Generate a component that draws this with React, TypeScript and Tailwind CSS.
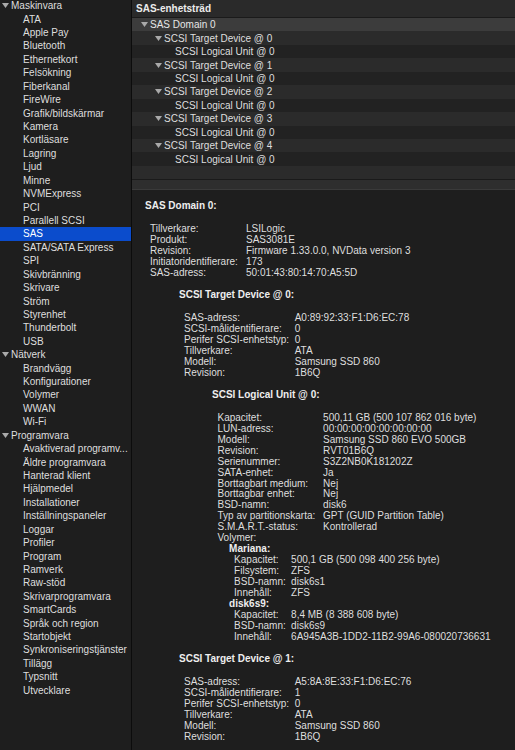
import React from 'react';

type NavItem = { label: string; group?: boolean };

const nav: NavItem[] = [
  { label: 'Maskinvara', group: true },
  { label: 'ATA' },
  { label: 'Apple Pay' },
  { label: 'Bluetooth' },
  { label: 'Ethernetkort' },
  { label: 'Felsökning' },
  { label: 'Fiberkanal' },
  { label: 'FireWire' },
  { label: 'Grafik/bildskärmar' },
  { label: 'Kamera' },
  { label: 'Kortläsare' },
  { label: 'Lagring' },
  { label: 'Ljud' },
  { label: 'Minne' },
  { label: 'NVMExpress' },
  { label: 'PCI' },
  { label: 'Parallell SCSI' },
  { label: 'SAS' },
  { label: 'SATA/SATA Express' },
  { label: 'SPI' },
  { label: 'Skivbränning' },
  { label: 'Skrivare' },
  { label: 'Ström' },
  { label: 'Styrenhet' },
  { label: 'Thunderbolt' },
  { label: 'USB' },
  { label: 'Nätverk', group: true },
  { label: 'Brandvägg' },
  { label: 'Konfigurationer' },
  { label: 'Volymer' },
  { label: 'WWAN' },
  { label: 'Wi-Fi' },
  { label: 'Programvara', group: true },
  { label: 'Avaktiverad programv...' },
  { label: 'Äldre programvara' },
  { label: 'Hanterad klient' },
  { label: 'Hjälpmedel' },
  { label: 'Installationer' },
  { label: 'Inställningspaneler' },
  { label: 'Loggar' },
  { label: 'Profiler' },
  { label: 'Program' },
  { label: 'Ramverk' },
  { label: 'Raw-stöd' },
  { label: 'Skrivarprogramvara' },
  { label: 'SmartCards' },
  { label: 'Språk och region' },
  { label: 'Startobjekt' },
  { label: 'Synkroniseringstjänster' },
  { label: 'Tillägg' },
  { label: 'Typsnitt' },
  { label: 'Utvecklare' },
];

const Disclosure = () => (
  <svg width="7" height="5" viewBox="0 0 7 5" className="shrink-0">
    <path d="M0 0 H7 L3.5 5 Z" fill="#a9a9a9" />
  </svg>
);

const Sidebar = () => (
  <div className="w-[131px] shrink-0 bg-[#1e1e1e] -mt-[1px]">
    {nav.map((item) =>
      item.group ? (
        <div key={item.label} className="h-[13.43px] flex items-center pl-[2px] gap-[2px] text-[#dedede]">
          <Disclosure />
          <span>{item.label}</span>
        </div>
      ) : (
        <div
          key={item.label}
          className={
            item.label === 'SAS'
              ? 'h-[13.43px] flex items-center pl-[23px] bg-[#0b4ccc] text-white'
              : 'h-[13.43px] flex items-center pl-[23px] text-[#dedede] whitespace-nowrap'
          }
        >
          {item.label}
        </div>
      )
    )}
  </div>
);

type TreeRow = { label: string; level: 0 | 1 | 2 };

const tree: TreeRow[] = [
  { label: 'SAS Domain 0', level: 0 },
  ...[0, 1, 2, 3, 4].flatMap((n) => [
    { label: `SCSI Target Device @ ${n}`, level: 1 as const },
    { label: 'SCSI Logical Unit @ 0', level: 2 as const },
  ]),
];

const Tree = () => (
  <div className="bg-[#262626]">
    <div className="h-[18px] flex items-center pl-[4px] font-bold text-[#ececec] bg-[#2a2a2a] border-b border-[#1a1a1a]">
      SAS-enhetsträd
    </div>
    {tree.map((row, i) => (
      <div
        key={i}
        className={
          i === 0
            ? 'h-[13.45px] flex items-center bg-[#3c3c3c] text-[#e6e6e6]'
            : i % 2 === 1
              ? 'h-[13.45px] flex items-center bg-[#2b2b2b] text-[#dedede]'
              : 'h-[13.45px] flex items-center bg-[#222222] text-[#dedede]'
        }
      >
        {row.level === 0 && (
          <span className="flex items-center gap-[2px] pl-[9px]">
            <Disclosure />
            {row.label}
          </span>
        )}
        {row.level === 1 && (
          <span className="flex items-center gap-[2px] pl-[23px]">
            <Disclosure />
            {row.label}
          </span>
        )}
        {row.level === 2 && <span className="pl-[43px]">{row.label}</span>}
      </div>
    ))}
    <div className="h-[13.45px] bg-[#2b2b2b]" />
  </div>
);

type Field = [string, string];

const domain: Field[] = [
  ['Tillverkare:', 'LSILogic'],
  ['Produkt:', 'SAS3081E'],
  ['Revision:', 'Firmware 1.33.0.0, NVData version 3'],
  ['Initiatoridentifierare:', '173'],
  ['SAS-adress:', '50:01:43:80:14:70:A5:5D'],
];

const target0: Field[] = [
  ['SAS-adress:', 'A0:89:92:33:F1:D6:EC:78'],
  ['SCSI-målidentifierare:', '0'],
  ['Perifer SCSI-enhetstyp:', '0'],
  ['Tillverkare:', 'ATA'],
  ['Modell:', 'Samsung SSD 860'],
  ['Revision:', '1B6Q'],
];

const target1: Field[] = [
  ['SAS-adress:', 'A5:8A:8E:33:F1:D6:EC:76'],
  ['SCSI-målidentifierare:', '1'],
  ['Perifer SCSI-enhetstyp:', '0'],
  ['Tillverkare:', 'ATA'],
  ['Modell:', 'Samsung SSD 860'],
  ['Revision:', '1B6Q'],
];

const unit: Field[] = [
  ['Kapacitet:', '500,11 GB (500 107 862 016 byte)'],
  ['LUN-adress:', '00:00:00:00:00:00:00:00'],
  ['Modell:', 'Samsung SSD 860 EVO 500GB'],
  ['Revision:', 'RVT01B6Q'],
  ['Serienummer:', 'S3Z2NB0K181202Z'],
  ['SATA-enhet:', 'Ja'],
  ['Borttagbart medium:', 'Nej'],
  ['Borttagbar enhet:', 'Nej'],
  ['BSD-namn:', 'disk6'],
  ['Typ av partitionskarta:', 'GPT (GUID Partition Table)'],
  ['S.M.A.R.T.-status:', 'Kontrollerad'],
];

const mariana: Field[] = [
  ['Kapacitet:', '500,1 GB (500 098 400 256 byte)'],
  ['Filsystem:', 'ZFS'],
  ['BSD-namn:', 'disk6s1'],
  ['Innehåll:', 'ZFS'],
];

const disk6s9: Field[] = [
  ['Kapacitet:', '8,4 MB (8 388 608 byte)'],
  ['BSD-namn:', 'disk6s9'],
  ['Innehåll:', '6A945A3B-1DD2-11B2-99A6-080020736631'],
];

const Gap = () => <div className="h-[11.7px]" />;

const Heading = ({ children }: { children: React.ReactNode }) => (
  <div className="h-[10.95px] leading-[10.95px] font-bold text-[#eeeeee]">{children}</div>
);

const Fields = ({ rows, labelWidth }: { rows: Field[]; labelWidth: string }) => (
  <div>
    {rows.map(([label, value]) => (
      <div key={label + value} className="h-[10.95px] leading-[10.95px] flex whitespace-nowrap">
        <span className={labelWidth + ' shrink-0'}>{label}</span>
        <span>{value}</span>
      </div>
    ))}
  </div>
);

const Details = () => (
  <div className="flex-1 bg-[#1e1e1e] pt-[11.5px] pl-[13px] text-[#dedede]">
    <Heading>SAS Domain 0:</Heading>
    <Gap />
    <div className="pl-[5px]">
      <Fields rows={domain} labelWidth="w-[96px]" />
    </div>
    <Gap />
    <div className="pl-[34px]">
      <Heading>SCSI Target Device @ 0:</Heading>
      <Gap />
      <div className="pl-[5px]">
        <Fields rows={target0} labelWidth="w-[110.7px]" />
      </div>
      <Gap />
      <div className="pl-[33px]">
        <Heading>SCSI Logical Unit @ 0:</Heading>
        <Gap />
        <div className="pl-[5.5px]">
          <Fields rows={unit} labelWidth="w-[105.6px]" />
          <div className="h-[10.95px] leading-[10.95px]">Volymer:</div>
          <div className="pl-[11.6px]">
            <Heading>Mariana:</Heading>
            <div className="pl-[5px]">
              <Fields rows={mariana} labelWidth="w-[57px]" />
            </div>
            <Heading>disk6s9:</Heading>
            <div className="pl-[5px]">
              <Fields rows={disk6s9} labelWidth="w-[57px]" />
            </div>
          </div>
        </div>
      </div>
      <Gap />
      <Heading>SCSI Target Device @ 1:</Heading>
      <Gap />
      <div className="pl-[5px]">
        <Fields rows={target1} labelWidth="w-[110.7px]" />
      </div>
    </div>
  </div>
);

export default function App() {
  return (
    <div className="w-[515px] h-[750px] overflow-hidden flex bg-[#1e1e1e] font-['Liberation_Sans',Arial,sans-serif] text-[10px]">
      <Sidebar />
      <div className="w-px bg-[#0c0c0c] shrink-0" />
      <div className="flex-1 flex flex-col min-w-0">
        <Tree />
        <div className="h-[10.6px] shrink-0 bg-[#2e2e2e] border-t border-[#1a1a1a] border-b border-b-[#3a3a3a]" />
        <Details />
      </div>
    </div>
  );
}
